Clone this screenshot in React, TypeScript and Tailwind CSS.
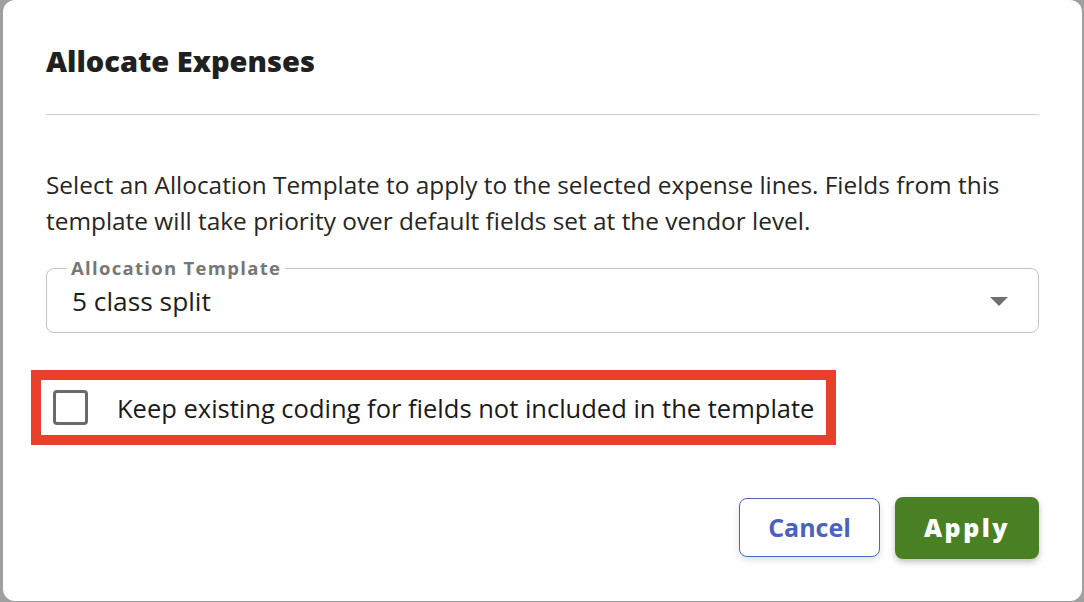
import React, { useState } from 'react';

const font = { fontFamily: '"Open Sans", Lato, sans-serif' };

export default function App() {
  const [keepCoding, setKeepCoding] = useState(false);
  const [template] = useState('5 class split');

  return (
    <div className="w-[1084px] h-[602px] bg-[#a0a0a0] pl-[3px] pr-[2px] overflow-hidden" style={font}>
      <div className="h-[601px] bg-white rounded-[12px] px-[43px] flex flex-col">
        <h2 className="text-[29px] font-extrabold text-[#202020] pt-[44px] leading-[34px]">Allocate Expenses</h2>
        <div className="mt-[36px] h-px bg-[#cfcfcf]" />

        <p className="mt-[52px] text-[24.4px] leading-[36px] text-[#262626]">
          Select an Allocation Template to apply to the selected expense lines. Fields from this template will take priority over default fields set at the vendor level.
        </p>

        <div className="relative mt-[29px] h-[65px] border border-[#c4c4c4] rounded-[8px] flex items-center pl-[25px] pr-[30px]">
          <span className="absolute -top-[12px] left-[20px] bg-white px-[4px] text-[18.5px] font-bold text-[#777] tracking-[1.3px] leading-[22px]">
            Allocation Template
          </span>
          <span className="flex-1 text-[26.3px] text-[#1e1e1e] pt-[0px] leading-[32px]">{template}</span>
          <svg width="18" height="9" viewBox="0 0 18 9" className="mt-[2px]">
            <path d="M0 0 L18 0 L9 9 Z" fill="#707070" />
          </svg>
        </div>

        <div className="mt-[37px] -ml-[15px] w-[805px] h-[75px] border-[10px] border-[#e8402a] flex items-center pl-[12px]">
          <button
            onClick={() => setKeepCoding(!keepCoding)}
            className="w-[35px] h-[35px] rounded-[4px] border-[3px] border-[#6a6a6a] bg-white flex items-center justify-center"
          >
            {keepCoding && (
              <svg width="22" height="22" viewBox="0 0 24 24">
                <path d="M5 12l5 5 9-10" stroke="#6a6a6a" strokeWidth="3" fill="none" />
              </svg>
            )}
          </button>
          <span className="ml-[29px] text-[25.5px] leading-[32px] text-[#1a1a1a]">Keep existing coding for fields not included in the template</span>
        </div>

        <div className="mt-[53px] flex justify-end gap-[15px]">
          <button className="w-[141px] h-[59px] rounded-[8px] border border-[#4a66c4] bg-white text-[#4a62c0] text-[25px] font-bold shadow-[0_3px_6px_rgba(0,0,0,0.12)]">
            Cancel
          </button>
          <button className="w-[144px] h-[62px] -mt-[1px] rounded-[8px] bg-[#4a8024] text-white text-[25px] font-extrabold tracking-[2.5px] shadow-[0_3px_6px_rgba(0,0,0,0.25)]">
            Apply
          </button>
        </div>
      </div>
    </div>
  );
}
